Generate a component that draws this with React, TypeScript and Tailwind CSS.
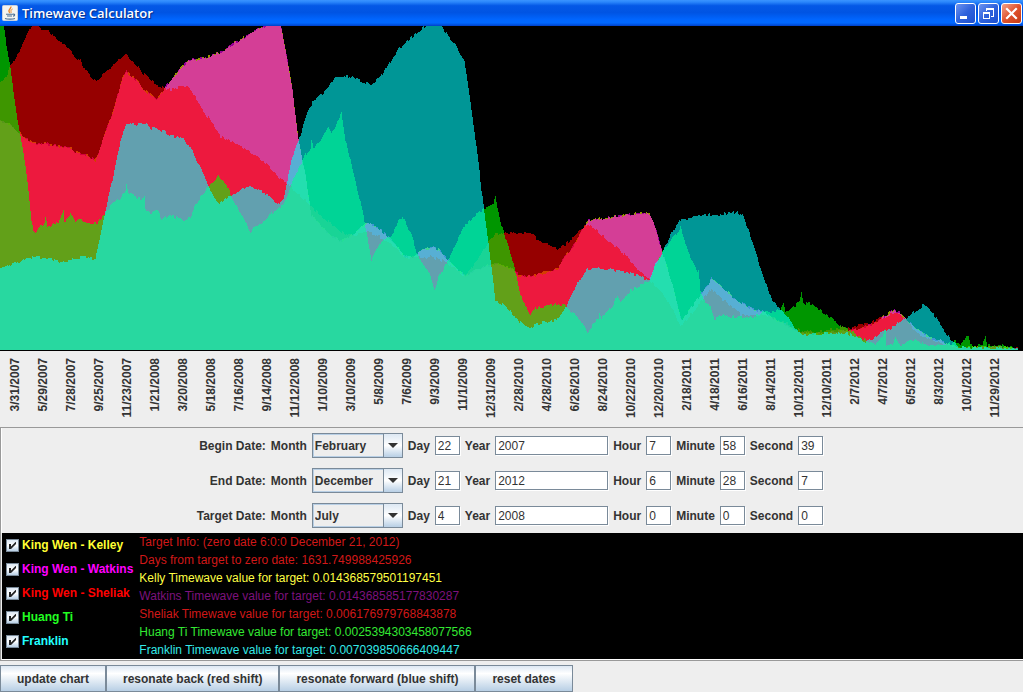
import { useState } from "react";

type Point = [number, number];

const CHART_TOP = 26;
const CHART_BOTTOM = 350;
const CHART_WIDTH = 1023;

const kingWen: Point[] = [
  [0, 122], [10, 124], [15, 130], [20, 134], [28, 140], [35, 143], [48, 144], [60, 147], [70, 148], [75, 152],
  [85, 155], [95, 160], [98, 152], [105, 132], [112, 113], [118, 92], [122, 77], [126, 71], [130, 76], [138, 81],
  [143, 90], [150, 94], [156, 99], [162, 92], [167, 84], [174, 76], [180, 68], [188, 60], [205, 58], [213, 54],
  [222, 52], [230, 45], [240, 40], [250, 33], [256, 30], [262, 28], [270, 24], [280, 24], [286, 55], [292, 90],
  [298, 140], [305, 175], [307, 190], [311, 215], [320, 225], [328, 234], [341, 241], [352, 235], [360, 228], [367, 222],
  [376, 227], [385, 234], [395, 244], [405, 257], [412, 257], [418, 253], [425, 249], [433, 247], [440, 251], [448, 260],
  [457, 269], [465, 276], [475, 270], [485, 266], [495, 264], [510, 268], [518, 275], [526, 277], [535, 275], [545, 272],
  [557, 269], [563, 258], [570, 250], [577, 239], [582, 228], [588, 221], [595, 219], [605, 218], [615, 216], [625, 215],
  [637, 213], [649, 214], [655, 227], [661, 250], [666, 265], [672, 285], [678, 310], [681, 320], [686, 314], [695, 302],
  [700, 295], [711, 279], [718, 284], [725, 290], [735, 299], [745, 305], [755, 310], [765, 313], [775, 320], [785, 325],
  [800, 333], [820, 334], [835, 332], [850, 330], [860, 328], [870, 325], [880, 319], [893, 310], [900, 313], [905, 319],
  [912, 326], [920, 332], [930, 338], [940, 341], [950, 345], [960, 348], [990, 347], [1005, 347], [1018, 349],
];

const sheliak: Point[] = [
  [0, 84], [5, 78], [10, 66], [16, 56], [20, 48], [25, 37], [30, 28], [33, 24], [38, 25], [42, 29],
  [48, 30], [53, 36], [60, 41], [65, 45], [70, 50], [75, 57], [80, 61], [85, 70], [92, 78], [95, 82],
  [98, 79], [105, 71], [110, 69], [116, 61], [120, 60], [126, 55], [130, 59], [138, 66], [141, 72], [145, 75],
  [150, 80], [156, 84], [165, 89], [174, 89], [180, 86], [187, 87], [192, 93], [200, 105], [203, 112], [210, 120],
  [220, 137], [228, 140], [235, 144], [250, 152], [262, 161], [270, 168], [277, 176], [283, 181], [290, 187], [300, 195],
  [310, 206], [318, 213], [330, 224], [341, 232], [352, 236], [360, 234], [367, 231], [376, 235], [385, 241], [395, 248],
  [405, 258], [418, 257], [433, 257], [445, 262], [457, 271], [465, 276], [473, 265], [480, 255], [488, 242], [495, 233],
  [508, 233], [526, 232], [530, 233], [540, 241], [550, 245], [558, 250], [565, 244], [575, 236], [580, 230], [587, 223],
  [592, 227], [600, 234], [610, 242], [620, 250], [628, 259], [640, 273], [649, 280], [655, 286], [665, 297], [672, 310],
  [680, 327], [690, 315], [700, 302], [711, 289], [720, 298], [730, 306], [740, 314], [755, 316], [765, 314], [775, 319],
  [785, 323], [800, 331], [815, 331], [825, 330], [843, 327], [850, 329], [855, 326], [862, 323], [868, 324], [873, 321],
  [880, 317], [885, 318], [893, 313], [900, 315], [905, 320], [912, 328], [920, 334], [930, 340], [940, 343], [950, 346],
  [960, 348], [990, 347], [1018, 349],
];

const huangTi: Point[] = [
  [0, 24], [3, 24], [6, 45], [10, 66], [13, 92], [18, 125], [21, 142], [25, 165], [28, 190], [31, 220],
  [33, 231], [35, 232], [40, 226], [44, 224], [45, 218], [47, 228], [52, 224], [58, 223], [62, 212], [63, 209],
  [64, 221], [70, 214], [75, 221], [80, 219], [90, 223], [97, 223], [106, 212], [112, 204], [120, 197], [125, 190],
  [126, 183], [128, 193], [140, 199], [144, 197], [145, 210], [150, 213], [157, 210], [161, 219], [170, 214], [175, 217],
  [183, 221], [190, 217], [195, 205], [203, 193], [208, 186], [213, 181], [218, 175], [222, 181], [226, 185], [231, 196],
  [238, 210], [245, 222], [250, 232], [255, 226], [262, 222], [270, 215], [280, 208], [287, 195], [292, 180], [300, 165],
  [306, 153], [310, 148], [311, 140], [313, 149], [320, 140], [328, 125], [331, 132], [336, 125], [341, 113], [345, 140],
  [350, 160], [357, 190], [363, 215], [366, 232], [371, 260], [376, 250], [383, 240], [390, 236], [393, 232], [397, 222],
  [402, 217], [406, 224], [412, 237], [416, 252], [420, 260], [425, 268], [430, 275], [434, 290], [438, 277], [445, 265],
  [452, 250], [458, 238], [465, 224], [472, 218], [480, 211], [485, 208], [490, 205], [493, 204], [495, 197], [497, 208],
  [502, 229], [508, 247], [513, 262], [520, 295], [525, 305], [530, 316], [535, 308], [545, 306], [556, 304], [565, 306],
  [572, 312], [580, 320], [587, 332], [595, 321], [598, 319], [599, 312], [601, 318], [605, 314], [612, 306], [617, 295],
  [620, 301], [630, 290], [640, 285], [650, 279], [655, 265], [662, 252], [672, 238], [678, 231], [680, 227], [685, 243],
  [692, 262], [698, 272], [700, 290], [705, 303], [710, 308], [714, 319], [720, 315], [725, 316], [735, 317], [745, 317],
  [755, 316], [762, 312], [770, 312], [780, 310], [783, 302], [785, 311], [795, 306], [799, 301], [801, 293], [803, 303],
  [810, 304], [820, 310], [830, 318], [840, 326], [850, 331], [860, 338], [868, 342], [875, 343], [882, 336], [885, 329],
  [886, 345], [892, 344], [895, 337], [900, 345], [905, 343], [915, 340], [925, 345], [945, 345], [952, 343], [955, 341],
  [960, 346], [966, 336], [968, 336], [970, 345], [982, 346], [985, 335], [987, 346], [1000, 345], [1018, 349],
];

const franklin: Point[] = [
  [0, 267], [4, 267], [10, 265], [18, 262], [27, 258], [40, 257], [50, 259], [62, 262], [72, 259], [85, 257],
  [95, 259], [98, 245], [103, 220], [108, 197], [113, 175], [118, 150], [122, 135], [126, 123], [135, 125], [145, 123],
  [150, 128], [160, 130], [170, 135], [183, 139], [190, 148], [197, 162], [205, 178], [210, 190], [219, 204], [225, 199],
  [233, 194], [245, 187], [255, 187], [260, 191], [270, 197], [279, 205], [283, 198], [288, 175], [292, 157], [298, 142],
  [305, 117], [312, 102], [320, 95], [328, 87], [333, 80], [341, 76], [352, 77], [360, 81], [372, 85], [380, 76],
  [390, 62], [398, 49], [410, 38], [418, 32], [427, 24], [440, 24], [448, 37], [455, 44], [460, 54], [464, 60],
  [468, 87], [473, 125], [478, 162], [481, 190], [485, 220], [490, 260], [495, 300], [505, 307], [515, 317], [527, 328],
  [540, 323], [556, 320], [565, 308], [572, 293], [580, 279], [587, 269], [595, 267], [605, 269], [620, 271], [635, 275],
  [649, 280], [655, 265], [662, 252], [670, 235], [676, 225], [681, 219], [695, 217], [705, 215], [720, 214], [737, 212],
  [742, 215], [750, 236], [757, 258], [760, 268], [766, 285], [772, 300], [780, 309], [788, 318], [797, 330], [803, 335],
  [815, 334], [830, 333], [845, 333], [855, 336], [865, 342], [875, 337], [882, 331], [890, 328], [900, 321], [907, 317],
  [915, 311], [923, 305], [930, 311], [938, 321], [945, 332], [950, 340], [957, 347], [970, 348], [1018, 349],
];

const waves = [
  { name: "Kelley", points: kingWen, color: "#ffff00", seed: 3 },
  { name: "Watkins", points: kingWen, color: "#ff00ff", seed: 4 },
  { name: "Sheliak", points: sheliak, color: "#ff0000", seed: 11 },
  { name: "Huang Ti", points: huangTi, color: "#00ff00", seed: 23 },
  { name: "Franklin", points: franklin, color: "#00ffff", seed: 37 },
];

const axisDates = [
  "3/31/2007", "5/29/2007", "7/28/2007", "9/25/2007", "11/23/2007", "1/21/2008",
  "3/20/2008", "5/18/2008", "7/16/2008", "9/14/2008", "11/12/2008", "1/10/2009",
  "3/10/2009", "5/8/2009", "7/6/2009", "9/3/2009", "11/1/2009", "12/31/2009",
  "2/28/2010", "4/28/2010", "6/26/2010", "8/24/2010", "10/22/2010", "12/20/2010",
  "2/18/2011", "4/18/2011", "6/16/2011", "8/14/2011", "10/12/2011", "12/10/2011",
  "2/7/2012", "4/7/2012", "6/5/2012", "8/3/2012", "10/1/2012", "11/29/2012",
];

const months = [
  "January", "February", "March", "April", "May", "June",
  "July", "August", "September", "October", "November", "December",
];

const dateRows = [
  { id: "begin", label: "Begin Date:", month: "February", day: "22", year: "2007", hour: "7", minute: "58", second: "39" },
  { id: "end", label: "End Date:", month: "December", day: "21", year: "2012", hour: "6", minute: "28", second: "7" },
  { id: "target", label: "Target Date:", month: "July", day: "4", year: "2008", hour: "0", minute: "0", second: "0" },
];

const toggles = [
  { label: "King Wen - Kelley", className: "text-[#ffff33]" },
  { label: "King Wen - Watkins", className: "text-[#ff00ff]" },
  { label: "King Wen - Sheliak", className: "text-[#ff0000]" },
  { label: "Huang Ti", className: "text-[#22ff22]" },
  { label: "Franklin", className: "text-[#22ffff]" },
];

const infoLines = [
  { text: "Target Info: (zero date 6:0:0 December 21, 2012)", className: "text-[#d01818]" },
  { text: "Days from target to zero date: 1631.749988425926", className: "text-[#d01818]" },
  { text: "Kelly Timewave value for target: 0.014368579501197451", className: "text-[#ffff44]" },
  { text: "Watkins Timewave value for target: 0.014368585177830287", className: "text-[#7d127d]" },
  { text: "Sheliak Timewave value for target: 0.006176979768843878", className: "text-[#d01818]" },
  { text: "Huang Ti Timewave value for target: 0.0025394303458077566", className: "text-[#33e833]" },
  { text: "Franklin Timewave value for target: 0.007039850666409447", className: "text-[#33e8e8]" },
];

// Stepped area outline, one column per sample, with a little roughness on top
function wavePath(points: Point[], seed: number) {
  let d = `M0 ${CHART_BOTTOM}`;
  let i = 0;
  for (let x = 0; x < 1018; x++) {
    while (i < points.length - 2 && points[i + 1][0] <= x) i++;
    const [x0, y0] = points[i];
    const [x1, y1] = points[i + 1];
    const base = y0 + ((y1 - y0) * (x - x0)) / (x1 - x0);
    const n = Math.sin(Math.floor(x / 2) * 12.9898 + Math.floor(seed / 2) * 78.233) * 43758.5453;
    const m = Math.sin(x * 4.137 + seed * 9.71) * 9871.37;
    const rough = (n - Math.floor(n) - 0.5) * 3 + (m - Math.floor(m) - 0.5) * 0.8;
    const y = Math.min(CHART_BOTTOM - 1, Math.round(base + rough));
    d += `V${y}H${x + 1}`;
  }
  return `${d}V${CHART_BOTTOM}Z`;
}

function TitleBar() {
  const blueButton =
    "flex h-[21px] w-[21px] items-center justify-center rounded-[3px] border border-white bg-gradient-to-br from-[#6d93f0] via-[#2f62dc] to-[#1c4fd0]";
  return (
    <header className="flex h-[26px] items-center justify-between bg-[linear-gradient(to_bottom,#3a94ff_0%,#2a86fb_8%,#0458e6_22%,#0054e3_48%,#0066ff_76%,#0068ff_88%,#0040c8_100%)] pl-[2px] pr-px">
      <div className="flex items-center gap-1">
        <svg width="16" height="16" viewBox="0 0 16 16" aria-hidden="true">
          <rect x="0.5" y="0.5" width="15" height="15" rx="1" fill="#f4f4f0" stroke="#c8d0dc" />
          <path d="M8.8 1.5c.8 2-2.6 3-1.8 5 .3.8 1 1.1 1 1.8" fill="none" stroke="#e8862a" strokeWidth="1.4" />
          <path d="M10.6 4c-2 1-2 2-1.2 3.6" fill="none" stroke="#e8862a" strokeWidth="1" />
          <path d="M4 9.2h7M5 11h5M11 9.2c2.4-.4 2 1.6 0 2M3 13.4c2 .9 8 .9 10 0" fill="none" stroke="#4a6f94" strokeWidth="1.1" />
        </svg>
        <h1 className="font-['Open_Sans',sans-serif] text-[13px] leading-5 font-semibold text-white [text-shadow:1px_1px_1px_#0a2a80]">
          Timewave Calculator
        </h1>
      </div>
      <div className="flex gap-0.5">
        <button type="button" aria-label="Minimize" className={blueButton}>
          <svg width="19" height="19" viewBox="0 0 19 19">
            <rect x="4" y="12" width="7" height="3" fill="#fff" />
          </svg>
        </button>
        <button type="button" aria-label="Restore" className={blueButton}>
          <svg width="19" height="19" viewBox="0 0 19 19" fill="none" stroke="#fff" shapeRendering="crispEdges">
            <path d="M7 7V4.5h7.5V12H12M7 5.5h7.5" />
            <path d="M4.5 8.5h6v6h-6zM4.5 9.5h6" />
          </svg>
        </button>
        <button
          type="button"
          aria-label="Close"
          className="flex h-[21px] w-[21px] items-center justify-center rounded-[3px] border border-white bg-gradient-to-br from-[#f0a088] via-[#e0522c] to-[#c43a14]"
        >
          <svg width="19" height="19" viewBox="0 0 19 19">
            <path d="M5 5l9 9M14 5l-9 9" stroke="#fff" strokeWidth="2.2" strokeLinecap="square" />
          </svg>
        </button>
      </div>
    </header>
  );
}

function WaveChart() {
  return (
    <section className="bg-[#eeeeee]">
      <svg
        className="block h-[325px] w-full border-b border-black bg-black"
        viewBox={`0 ${CHART_TOP} ${CHART_WIDTH} ${CHART_BOTTOM - CHART_TOP}`}
        preserveAspectRatio="none"
        shapeRendering="crispEdges"
        role="img"
        aria-label="Timewave chart"
      >
        {waves.map((wave) => (
          <path key={wave.name} d={wavePath(wave.points, wave.seed)} fill={wave.color} fillOpacity={0.588} />
        ))}
      </svg>
      <div className="flex h-[76px] items-start pt-[7px] pr-[14px] pl-px">
        {axisDates.map((date) => (
          <div key={date} className="flex flex-1 justify-center">
            <span className="rotate-180 text-xs leading-4 font-bold [writing-mode:vertical-rl]">{date}</span>
          </div>
        ))}
      </div>
    </section>
  );
}

function Field({ id, label, value, wide }: { id: string; label: string; value: string; wide?: boolean }) {
  const [text, setText] = useState(value);
  return (
    <>
      <label htmlFor={id}>{label}</label>
      <input
        id={id}
        type="text"
        value={text}
        onChange={(e) => setText(e.target.value)}
        className={`${wide ? "w-[113px]" : "w-[25px]"} h-[19px] border border-[#7a8a99] bg-white px-0.5 text-xs font-normal text-[#333333] shadow-[1px_1px_0_#ffffff] outline-none`}
      />
    </>
  );
}

function DateRow({ row }: { row: (typeof dateRows)[number] }) {
  const [month, setMonth] = useState(row.month);
  return (
    <div className="flex h-[35px] items-center justify-center gap-[5px]">
      <span className="w-[70px] text-right whitespace-nowrap">{row.label}</span>
      <label htmlFor={`${row.id}-month`}>Month</label>
      <div className="relative">
        <select
          id={`${row.id}-month`}
          value={month}
          onChange={(e) => setMonth(e.target.value)}
          className="block h-[25px] w-[91px] appearance-none border border-[#7a8a99] bg-[#eeeeee] pl-0.5 text-xs font-bold text-[#333333] shadow-[inset_1px_1px_0_#b8cfe5,inset_0_-1px_0_#b8cfe5] outline-none"
        >
          {months.map((m) => (
            <option key={m}>{m}</option>
          ))}
        </select>
        <span className="pointer-events-none absolute inset-y-0 right-0 flex w-5 items-center justify-center border border-[#7a8a99] bg-gradient-to-b from-[#dde8f3] via-white to-[#b8cfe5]">
          <svg width="10" height="5" viewBox="0 0 10 5">
            <path d="M0 0h10L5 5z" fill="#333" />
          </svg>
        </span>
      </div>
      <Field id={`${row.id}-day`} label="Day" value={row.day} />
      <Field id={`${row.id}-year`} label="Year" value={row.year} wide />
      <Field id={`${row.id}-hour`} label="Hour" value={row.hour} />
      <Field id={`${row.id}-minute`} label="Minute" value={row.minute} />
      <Field id={`${row.id}-second`} label="Second" value={row.second} />
    </div>
  );
}

function WaveToggle({ label, className }: { label: string; className: string }) {
  return (
    <label className={`flex h-6 items-center gap-[3px] whitespace-nowrap ${className}`}>
      <span className="grid">
        <input
          type="checkbox"
          defaultChecked
          className="peer col-start-1 row-start-1 h-[13px] w-[13px] appearance-none border border-[#7a8a99] bg-gradient-to-b from-[#dde8f3] via-white to-[#b8cfe5]"
        />
        <svg
          className="pointer-events-none invisible col-start-1 row-start-1 peer-checked:visible"
          width="13"
          height="13"
          viewBox="0 0 13 13"
        >
          <path d="M3 5h2v2.5L9.5 3H10v2L5 10H3z" fill="#222" />
        </svg>
      </span>
      {label}
    </label>
  );
}

export default function App() {
  const buttonClass =
    "h-[27px] border border-[#7a8a99] bg-gradient-to-b from-[#dde8f3] via-white via-30% to-[#b8cfe5] px-4 text-xs font-bold text-[#333333] outline-1 -outline-offset-1 outline-[#7a8a99]";
  return (
    <div className="min-h-screen bg-[#eeeeee] font-['Liberation_Sans',Arial,sans-serif] text-xs font-bold text-[#333333]">
      <TitleBar />
      <WaveChart />
      <main className="border-t border-l border-[#999999]">
        <form className="border-l border-white pr-[6px]" onSubmit={(e) => e.preventDefault()}>
          {dateRows.map((row) => (
            <DateRow key={row.id} row={row} />
          ))}
        </form>
        <section className="ml-px flex gap-[6px] border-b border-white bg-black pl-1">
          <div>
            {toggles.map((toggle) => (
              <WaveToggle key={toggle.label} {...toggle} />
            ))}
          </div>
          <div className="font-normal">
            {infoLines.map((line) => (
              <p key={line.text} className={`leading-[18px] ${line.className}`}>
                {line.text}
              </p>
            ))}
          </div>
        </section>
      </main>
      <footer className="flex border-t border-[#999999] pt-1">
        <button type="button" className={buttonClass}>update chart</button>
        <button type="button" className={buttonClass}>resonate back (red shift)</button>
        <button type="button" className={buttonClass}>resonate forward (blue shift)</button>
        <button type="button" className={buttonClass}>reset dates</button>
      </footer>
    </div>
  );
}
